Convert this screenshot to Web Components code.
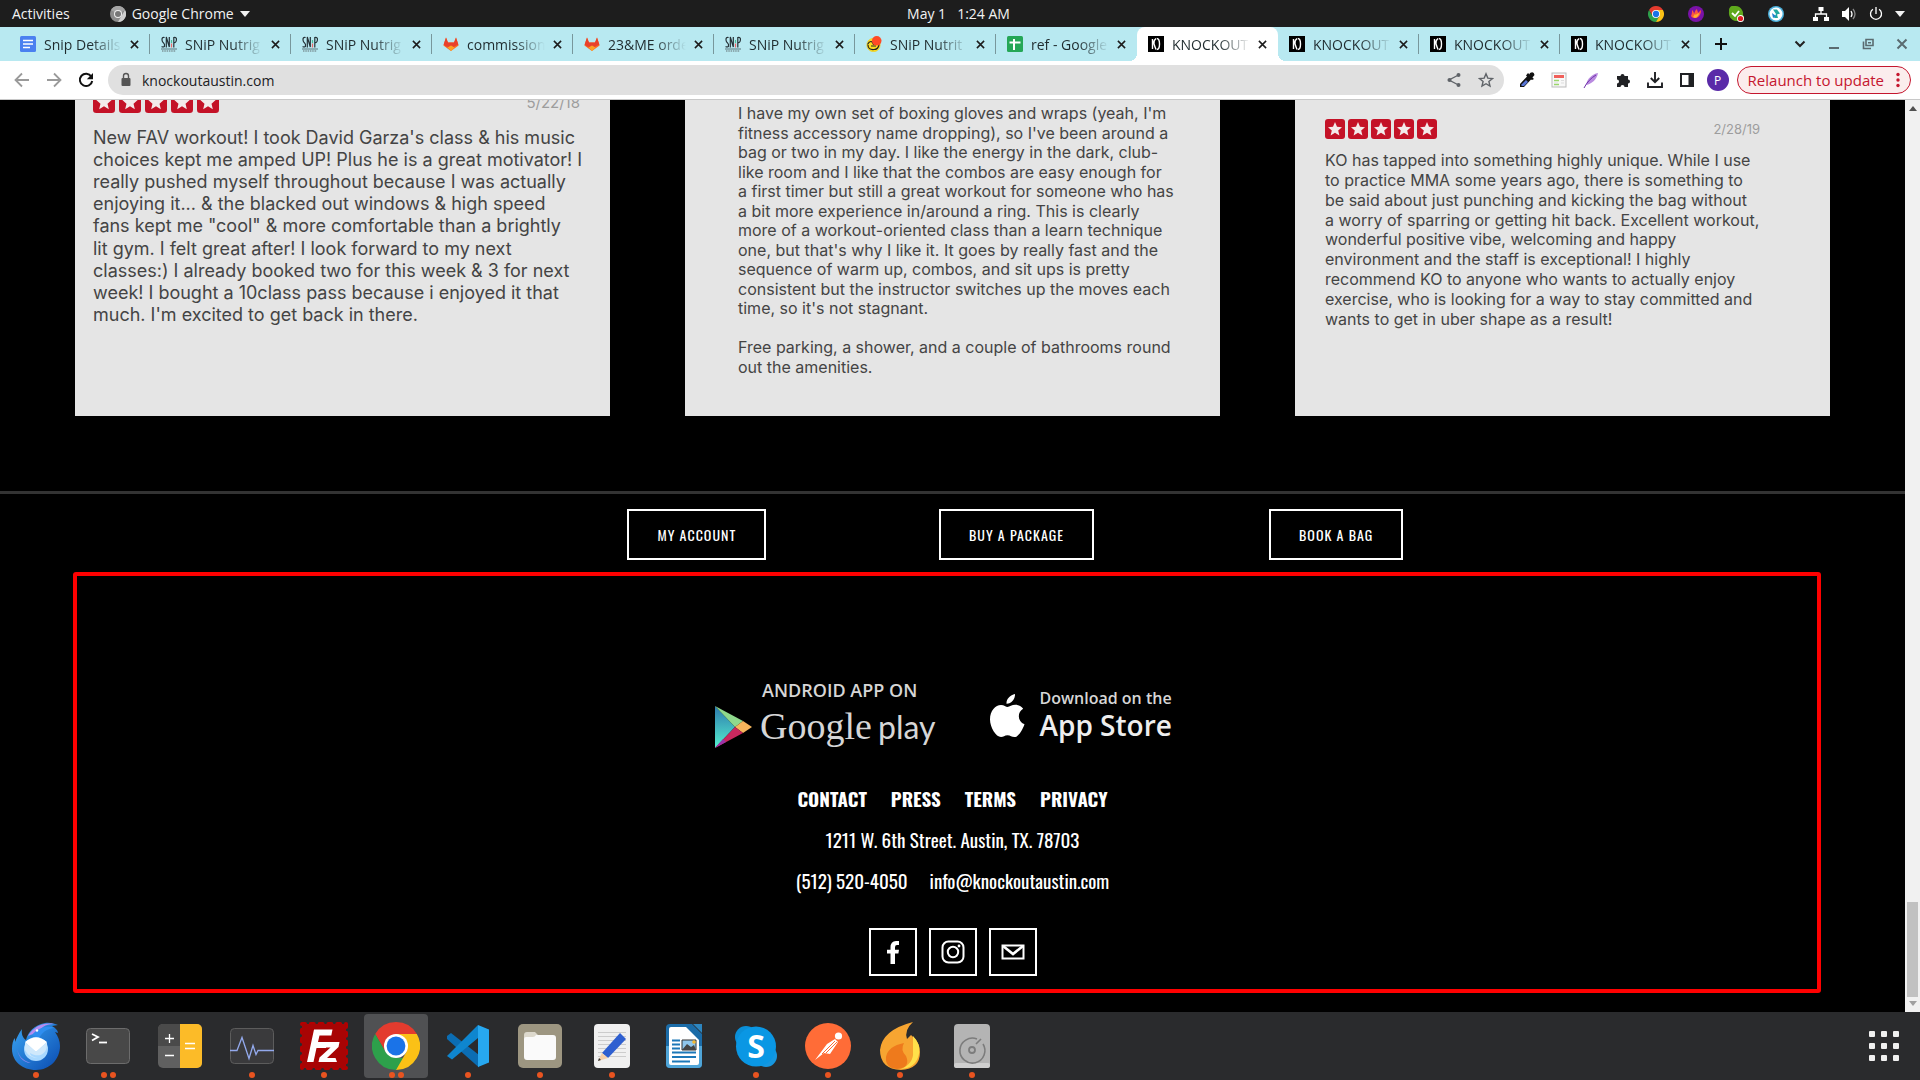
<!DOCTYPE html>
<html lang="en">
<head>
<meta charset="utf-8">
<title>knockoutaustin.com</title>
<style>
  html, body { height: 100%; }
  body { margin: 0; background: #000; font-family: "Open Sans", "Noto Sans", sans-serif; overflow: hidden; }
</style>
</head>
<body>
<desktop-screen>
  <top-bar></top-bar>
  <tab-strip>
    <browser-tab icon="docs">Snip Details</browser-tab>
    <browser-tab icon="snip">SNiP Nutrig</browser-tab>
    <browser-tab icon="snip">SNiP Nutrig</browser-tab>
    <browser-tab icon="gitlab">commission</browser-tab>
    <browser-tab icon="gitlab">23&amp;ME orde</browser-tab>
    <browser-tab icon="snip">SNiP Nutrig</browser-tab>
    <browser-tab icon="face">SNiP Nutrit</browser-tab>
    <browser-tab icon="sheets" last>ref - Google</browser-tab>
    <browser-tab icon="ko" active>KNOCKOUT</browser-tab>
    <browser-tab icon="ko">KNOCKOUT</browser-tab>
    <browser-tab icon="ko">KNOCKOUT</browser-tab>
    <browser-tab icon="ko">KNOCKOUT</browser-tab>
  </tab-strip>
  <tool-bar></tool-bar>
  <page-view>
    <review-row>
      <review-card variant="large" date="5/22/18">
        <span>New FAV workout! I took David Garza's class &amp; his music</span>
        <span>choices kept me amped UP! Plus he is a great motivator! I</span>
        <span>really pushed myself throughout because I was actually</span>
        <span>enjoying it... &amp; the blacked out windows &amp; high speed</span>
        <span>fans kept me "cool" &amp; more comfortable than a brightly</span>
        <span>lit gym. I felt great after! I look forward to my next</span>
        <span>classes:) I already booked two for this week &amp; 3 for next</span>
        <span>week! I bought a 10class pass because i enjoyed it that</span>
        <span>much. I'm excited to get back in there.</span>
      </review-card>
      <review-card variant="plain">
        <span>I have my own set of boxing gloves and wraps (yeah, I'm</span>
        <span>fitness accessory name dropping), so I've been around a</span>
        <span>bag or two in my day. I like the energy in the dark, club-</span>
        <span>like room and I like that the combos are easy enough for</span>
        <span>a first timer but still a great workout for someone who has</span>
        <span>a bit more experience in/around a ring. This is clearly</span>
        <span>more of a workout-oriented class than a learn technique</span>
        <span>one, but that's why I like it. It goes by really fast and the</span>
        <span>sequence of warm up, combos, and sit ups is pretty</span>
        <span>consistent but the instructor switches up the moves each</span>
        <span>time, so it's not stagnant.</span>
        <span></span>
        <span>Free parking, a shower, and a couple of bathrooms round</span>
        <span>out the amenities.</span>
      </review-card>
      <review-card variant="small" date="2/28/19">
        <span>KO has tapped into something highly unique. While I use</span>
        <span>to practice MMA some years ago, there is something to</span>
        <span>be said about just punching and kicking the bag without</span>
        <span>a worry of sparring or getting hit back. Excellent workout,</span>
        <span>wonderful positive vibe, welcoming and happy</span>
        <span>environment and the staff is exceptional! I highly</span>
        <span>recommend KO to anyone who wants to actually enjoy</span>
        <span>exercise, who is looking for a way to stay committed and</span>
        <span>wants to get in uber shape as a result!</span>
      </review-card>
    </review-row>
    <action-row></action-row>
    <site-footer></site-footer>
  </page-view>
  <app-dock></app-dock>
</desktop-screen>

<script>
const svg = (box, body) => `<svg viewBox="${box}" aria-hidden="true">${body}</svg>`;
const chromeLogo = svg("0 0 48 48", `<path d="M24 0A24 24 0 0 1 44.8 12H24L13.6 30 3.2 12A24 24 0 0 1 24 0z" fill="#e33b2e"/><path d="M3.2 12 13.6 30 24 36h10.4L24 48A24 24 0 0 1 3.2 12z" fill="#2da04b"/><path d="M44.8 12A24 24 0 0 1 24 48L34.4 30 24 12z" fill="#fbc116"/><circle cx="24" cy="24" r="12" fill="#fff"/><circle cx="24" cy="24" r="9.4" fill="#1a73e8"/>`);

const ICONS = {
  chrome: chromeLogo,
  chromeGray: svg("0 0 16 16", `<circle cx="8" cy="8" r="8" fill="#8b8b8b"/><path d="M8 8 1 4a8 8 0 0 1 14 0z" fill="#a5a5a5"/><path d="M15 4a8 8 0 0 1-7 12l3.500-6z" fill="#d0d0d0"/><circle cx="8" cy="8" r="4" fill="#eee"/><circle cx="8" cy="8" r="3" fill="#777"/>`),
  flame: svg("0 0 16 16", `<circle cx="8" cy="8" r="8" fill="#7a12a8"/><path d="M3 10c1-2 1-4 1-6 1 1 2 2 2 4 1-2 1-4 3-5 0 2 1 2 1 4l3-3c0 3-1 7-5 8-2 0-4 0-5-2z" fill="#ff5a3c"/><path d="M5 11c1-1 1-2 2-3 0 1 1 1 2 0l2-1c0 2-2 5-4 5z" fill="#ffb52e"/>`),
  greenCheck: svg("0 0 16 16", `<path d="M1 4a4 4 0 0 1 5-4 8 8 0 0 1 9 9 4 4 0 0 1-5 6A8 8 0 0 1 1 6z" fill="#5fa91c"/><path d="m4 7 3 3 4-5" fill="none" stroke="#fff" stroke-width="1.800"/><circle cx="12.500" cy="12.500" r="3.500" fill="#fff"/><circle cx="12.500" cy="12.500" r="2.600" fill="#e01b24"/>`),
  teal: svg("0 0 16 16", `<circle cx="8" cy="8" r="8" fill="#4ab0dc"/><circle cx="8" cy="8" r="6.500" fill="#fff"/><path d="M5 3.500h4l3 4-3 1 1 3.500H6l2-4z" fill="#20a8a0"/><path d="M4 7l4 3-3 2z" fill="#1e7fd0"/>`),
  network: svg("0 0 16 16", `<path d="M5.500 1h5v4h-5zM0 11h5v4H0zM11 11h5v4h-5z" fill="#fff"/><path d="M8 5v3M2.500 11V8h11v3" fill="none" stroke="#fff" stroke-width="1.300"/>`),
  volume: svg("0 0 16 16", `<path d="M1 5h3l4-4v14l-4-4H1z" fill="#fff"/><path d="M10 5q2 3 0 6" stroke="#fff" fill="none" stroke-width="1.300"/><path d="M12 3q4 5 0 10" stroke="#888" fill="none" stroke-width="1.300"/>`),
  power: svg("0 0 16 16", `<path d="M8 0v8M4.500 2.500a6.300 6.300 0 1 0 7 0" stroke="#fff" fill="none" stroke-width="1.500"/>`),
  caret: svg("0 0 10 6", `<path d="M0 0h10L5 6z" fill="#f2f2f2"/>`),
  docs: svg("0 0 16 16", `<rect width="16" height="16" rx="1.500" fill="#4a80f0"/><path d="M3 4.500h10M3 8h10M3 11.500h7" stroke="#fff" stroke-width="1.700"/>`),
  sheets: svg("0 0 16 16", `<rect width="16" height="16" rx="1.500" fill="#25a756"/><path d="M2.500 6.500h11M7 3v11" stroke="#fff" stroke-width="2"/>`),
  snip: svg("0 0 16 16", `<g fill="none" stroke="#253238" stroke-width="1.200"><path d="M3.600 1.500Q.8.800 1 4q.2 2 1.600 3T3.400 10.500Q2 11.500.6 10.500"/><path d="M5.300 11.500V1l3 10V1"/><path d="M12.800 11.500V1.500q3-.6 2.600 2.500T12.800 6.500"/></g><path d="M10.500 4v3" stroke="#4bbf9a" stroke-width="1.200"/><path d="M10.500 7.500v4" stroke="#e66" stroke-width="1.200"/><path d="M0 13h16" stroke="#5d777c" stroke-width="1"/><path d="M1 15h14" stroke="#7d979c" stroke-width="1.500" stroke-dasharray="1.500 .8"/>`),
  gitlab: svg("0 0 16 16", `<path d="m8 15 7.600-5.600-2.600-8-2 5H5L3 1.400.4 9.400z" fill="#fc6d26"/><path d="M8 15 .6 8.500 3 1.400 5 6.400h6l2-5 2.400 7-2.900 1.500L8 12.500 3 10z" fill="#e8412c"/><path d="m4.500 11.500 3.500-2 3.500 2L8 15z" fill="#fca326"/>`),
  face: svg("0 0 16 16", `<circle cx="7.500" cy="9" r="6.700" fill="#fbdc20" stroke="#eccb1c" stroke-width=".6"/><path d="M1.500 8.500c2-4 5-4 6 0h6M2 9q0 5 6 4.500 4 0 5-4.500M5 10h5" stroke="#222" fill="none" stroke-width="1.200"/><circle cx="10.700" cy="4.800" r="4.800" fill="#ff4a26"/>`),
  ko: svg("0 0 16 16", `<rect width="16" height="16" fill="#000"/><g fill="none" stroke="#fff" stroke-width="1.400"><path d="M4.500 3v10M8 2.500Q5 5 6 8t2 5.500"/><path d="M8.800 2.500Q11.500 2.500 11.500 8t-2.700 5.500"/></g>`),
  close: svg("0 0 10 10", `<path d="m1 1 8 8M9 1 1 9" stroke="currentColor" stroke-width="1.700"/>`),
  plus: svg("0 0 12 12", `<path d="M6 0v12M0 6h12" stroke="#111" stroke-width="2"/>`),
  chevron: svg("0 0 12 12", `<path d="m1.500 3.500 4.500 4.500 4.500-4.500" fill="none" stroke="#222" stroke-width="2"/>`),
  minimize: svg("0 0 12 12", `<path d="M1 10h10" stroke="#5a6b70" stroke-width="2"/>`),
  restore: svg("0 0 12 12", `<path d="M4 1.500h7v6H4zM1.500 3.500V10.500H9" fill="none" stroke="#5a6b70" stroke-width="1.600"/><path d="M6 4h3v1.500H6z" fill="#5a6b70"/>`),
  closeGray: svg("0 0 12 12", `<path d="m1.500 1.500 9 9M10.500 1.500l-9 9" stroke="#5a6b70" stroke-width="2"/>`),
  back: svg("0 0 16 16", `<path d="M15 8H2M8 1.500 1.500 8 8 14.500" fill="none" stroke="#9a9a9a" stroke-width="1.800"/>`),
  forward: svg("0 0 16 16", `<path d="M1 8h13M8 1.500 14.500 8 8 14.500" fill="none" stroke="#9a9a9a" stroke-width="1.800"/>`),
  reload: svg("0 0 16 16", `<path d="M13.300 4.500A6.200 6.200 0 1 0 14.200 9" fill="none" stroke="#111" stroke-width="2"/><path d="M15 1v6.200H8.800z" fill="#111"/>`),
  lock: svg("0 0 12 16", `<rect x="1.500" y="6" width="9" height="8" rx="1" fill="#555"/><path d="M3.500 6V4a2.500 2.500 0 0 1 5 0v2" fill="none" stroke="#555" stroke-width="1.400"/>`),
  share: svg("0 0 16 16", `<path d="M12.500 3 3 8l9.500 5" fill="none" stroke="#5f6368" stroke-width="1.400"/><circle cx="12.500" cy="3" r="2" fill="#5f6368"/><circle cx="3.500" cy="8" r="2" fill="#5f6368"/><circle cx="12.500" cy="13" r="2" fill="#5f6368"/>`),
  star: svg("0 0 16 16", `<path d="m8 1.800 1.800 4.300 4.700.4-3.600 3 1.100 4.600L8 11.700l-4 2.400 1.100-4.600-3.600-3 4.700-.4z" fill="none" stroke="#5f6368" stroke-width="1.400"/>`),
  dropper: svg("0 0 16 16", `<path d="m9 1 6 6-2 1-1-.5L5 15H1v-3l7-7.500L7 3.500z" fill="#111"/><path d="m7 8 2 2-4 4H2.500v-1.500z" fill="#5976d8"/><path d="M11 1q4-2 4.500 2L13 6l-3-3z" fill="#111"/>`),
  page: svg("0 0 16 16", `<rect x="1" y="1" width="14" height="14" fill="#f8f8f8" stroke="#bbb"/><path d="M3 3h10v3H3z" fill="#f0605a"/><path d="M3 8.500h5M3 12.500h5" stroke="#9bd66b" stroke-width="1.500"/><path d="M10 8.500h3M10 11h3M3 11h4" stroke="#ddd"/>`),
  feather: svg("0 0 16 16", `<path d="M3 13C4 7 9 2 15 1c-1 6-6 11-12 12z" fill="#b98ae0"/><path d="M1 16C4 10 8 6 13 3" stroke="#6f33a8" fill="none"/>`),
  puzzle: svg("0 0 16 16", `<path d="M2 4h3.500a2 2 0 1 1 4 0H13v3.500a2 2 0 1 1 0 4V15H9.500a2 2 0 0 0-4 0H2v-3.500a2 2 0 0 0 0-4z" fill="#202124"/>`),
  download: svg("0 0 16 16", `<path d="M8 0v10M3.800 6 8 10.200 12.200 6M1 10.500V15h14v-4.500" fill="none" stroke="#202124" stroke-width="1.900"/>`),
  panel: svg("0 0 16 16", `<path d="M2 2h12v12H2z" fill="none" stroke="#202124" stroke-width="2"/><path d="M9.500 2H14v12H9.500z" fill="#202124"/>`),
  dots: svg("0 0 4 16", `<g fill="#c5162e"><circle cx="2" cy="2.500" r="1.700"/><circle cx="2" cy="8" r="1.700"/><circle cx="2" cy="13.500" r="1.700"/></g>`),
  rating: svg("0 0 20 20", `<rect width="20" height="20" rx="3" fill="#c41227"/><path d="m10 3 2 4.800 5 .4-3.800 3.300 1.200 5L10 13.800l-4.400 2.700 1.200-5L3 8.200l5-.4z" fill="#f3eaea"/>`),
  play: svg("0 0 37 42", `<defs><linearGradient id="g" x1="0" y1="0" x2="0" y2="1"><stop offset="0" stop-color="#2d79ad"/><stop offset="1" stop-color="#55f0cf"/></linearGradient></defs><path d="M0 0v42l20-21z" fill="url(#g)"/><path d="M0 0 28 15l-8 6z" fill="#8fd98c"/><path d="m20 21 8-6 9 6-9 6z" fill="#f6b65c"/><path d="m0 42 20-21 8 6z" fill="#c8285e"/><path d="m0 42 8-9 3 3z" fill="#9b33a8"/>`),
  apple: svg("0 0 35 43", `<path d="M25 0c.5 5-4 10-8.500 9.800C16 5 20.500.8 25 0z" fill="#fff"/><path d="M17.500 13c2 0 4.500-2.300 8-2.200 3.300.1 6 1.500 7.700 4-6.500 4-5.500 12.700 1.300 15.500C32.500 36 28.500 43 24.500 43c-3 0-4-1.800-7-1.800S13.500 43 11 43C6 43 0 33.500 0 25.500 0 16.500 5.500 11 11 11c3 0 5 2 6.500 2z" fill="#fff"/>`),
  facebook: svg("0 0 24 24", `<path d="M9.500 24V13.500H6V9.700h3.500V7.500Q9.500 1 15 1h3v4h-2Q14 5 14 7.200v2.500h4l-.6 3.800H14V24z" fill="#fff"/>`),
  instagram: svg("0 0 24 24", `<rect x="1.500" y="1.500" width="21" height="21" rx="6" fill="none" stroke="#fff" stroke-width="2"/><circle cx="12" cy="12" r="5.200" fill="none" stroke="#fff" stroke-width="2"/><circle cx="18" cy="6" r="1.400" fill="#fff"/>`),
  mail: svg("0 0 24 24", `<path d="M1.500 5.500h21v13h-21z" fill="none" stroke="#fff" stroke-width="2"/><path d="M2 6 12 14 22 6" fill="none" stroke="#fff" stroke-width="2.600"/>`),
  thunderbird: svg("0 0 48 48", `<defs><linearGradient id="a" x1="0" y1="0" x2="1" y2="1"><stop offset="0" stop-color="#3ba7f5"/><stop offset="1" stop-color="#0a4bb0"/></linearGradient></defs><path d="M10 7c-1 5 1 9 4 11 2-8 8-15 19-17 5-1 10 1 13 2l-6 1c3 2 6 4 6 7l-3-1c3 4 5 9 5 14 0 13-10 24-24 24S0 39 0 27c0-5 1-9 3-11v4c2-5 4-9 7-13z" fill="url(#a)"/><path d="M16 14C22 4 32 0 42 2c-9 0-14 4-16 10-3 0-6 0-10 2z" fill="#b58cf0"/><path d="M20 13C26 6 34 3 43 6c-8 0-14 5-16 11z" fill="#2f8ef0"/><circle cx="24" cy="27" r="12" fill="#a8d8ff"/><path d="M13 20q11-9 22 0L25 29q-1 1-2 0z" fill="#fff"/><path d="M13 20v8q4 8 13 8c-6-1-8-3-8-5 8 5 17 2 17-9v-2L25 29q-1 1-2 0z" fill="#cfe8fb"/><path d="M5 24c0 9 6 15 14 17-9 0-14-8-14-17z" fill="#7e86ec"/><circle cx="25" cy="8.500" r="1.200" fill="#fff"/>`),
  terminal: svg("0 0 48 48", `<rect x="2.500" y="6.500" width="43" height="35" rx="4" fill="#484848" stroke="#6c6c6c"/><path d="m8 12 6 3-6 3.500" fill="none" stroke="#fff" stroke-width="1.800"/><path d="M15 20.500h8" stroke="#fff" stroke-width="1.800"/>`),
  calc: svg("0 0 48 48", `<rect x="2" y="2" width="44" height="44" rx="5" fill="#606060"/><path d="M24 2H7a5 5 0 0 0-5 5v17h22z" fill="#4a4a4a"/><path d="M24 2h17a5 5 0 0 1 5 5v34a5 5 0 0 1-5 5H24z" fill="#fcbb28"/><path d="M9 16.500h9M13.500 12v9M9 33.500h9M29 21.500h10M29 26.500h10" stroke="#fff" stroke-width="1.300"/>`),
  monitor: svg("0 0 48 48", `<rect x="2.500" y="6.500" width="43" height="35" rx="4" fill="#3a3a3c" stroke="#5c5c5c"/><path d="M2 28.500h7l5-13 7 21 4-13 3 9 2-4h16" fill="none" stroke="#93a9ec" stroke-width="1.300"/>`),
  filezilla: svg("0 0 48 48", `<rect x="2" y="2" width="44" height="44" fill="#a60000" stroke="#b40000" stroke-width="4" stroke-linecap="round" stroke-dasharray="3 5.800"/><rect x="2" y="2" width="44" height="44" fill="#a80404"/><path d="M7 40 14 7.500H32.500L31.300 13.500H19.500L18 20h9.500L26 26H16.500L13.500 40zM23 20H39.500L38.500 25 27 36h8.500L37 40H18.500L19.500 35.500 30.500 25.500H22z" fill="#fff"/>`),
  vscode: svg("0 0 48 48", `<path d="m3 14 4-3L35 33v12.500L3 17z" fill="#0b6db3"/><path d="M3 34 34 3v13L8 37.500 3 34z" fill="#0e86cf"/><path d="M34 3 45 7.500v33L34 45z" fill="#27a8f0"/>`),
  files: svg("0 0 48 48", `<rect x="2" y="2" width="44" height="44" rx="5" fill="#9d9681"/><path d="M8 13q0-3 3-3h8l3 3h15v10H8z" fill="#ddd9cd"/><path d="M8 17q0-2 2-2h7q2 0 3-2h17q3 0 3 3v19q0 3-3 3H11q-3 0-3-3z" fill="#fafafa"/>`),
  editor: svg("0 0 48 48", `<rect x="6" y="2" width="36" height="44" rx="4" fill="#f0f0f0"/><path d="M10 10.500h28M10 14.500h28M10 18.500h28M10 22.500h28M10 26.500h28M10 30.500h28M10 34.500h28" stroke="#ccc"/><path d="M32 11 38 17 20 36l-6-5z" fill="#2e5fd0"/><path d="m14 31 6 5-10 3z" fill="#f6cfa8"/><path d="m11 36 2 2-3 1z" fill="#333"/>`),
  writer: svg("0 0 48 48", `<path d="M10 2h22l10 10v30q0 4-4 4H10q-4 0-4-4V6q0-4 4-4z" fill="#1b6ca8"/><path d="M6 24h36v18q0 4-4 4H10q-4 0-4-4z" fill="#4fa5d8"/><path d="M11 5h15l13 13v23q0 2-2 2H11q-2 0-2-2V7q0-2 2-2z" fill="#fff"/><path d="M33 2h9v9z" fill="#2d86c0"/><path d="M12 18.500h8M12 22.500h8M12 26.500h8M12 30.500h24M12 35h24M12 39.500h18" stroke="#1d78b8" stroke-width="2"/><path d="M22 18h14v10H22z" fill="#8fc6ec" stroke="#333"/><path d="m22 28 5-6 4 3 3-2 2 5z" fill="#444"/><circle cx="34" cy="20" r="1.800" fill="#f5b82e"/>`),
  skype: svg("0 0 48 48", `<circle cx="14" cy="15" r="11" fill="#0a8fd8"/><circle cx="34" cy="34" r="11" fill="#1697e0"/><circle cx="24" cy="24.500" r="20" fill="#0a97e4"/><text x="24" y="36" text-anchor="middle" font-family="Open Sans" font-weight="700" font-size="32" fill="#fff">S</text>`),
  postman: svg("0 0 48 48", `<circle cx="24" cy="24" r="23" fill="#ff6c37"/><circle cx="34.500" cy="14" r="3.600" fill="#fff"/><path d="m31 17 3 3-8 12-6-1-9 7 9-12 3-4z" fill="#fff"/><path d="M31 19 18 32M33 20 22 31" stroke="#ff6c37"/>`),
  burn: svg("0 0 48 48", `<path d="M37 0q-9 8-6 17l4-4q9 7 9 17 0 17-19 18Q4 47 4 28 6 8 37 0z" fill="#f7a531"/><path d="M37 14q8 8 6 18-3 14-18 15 13-6 12-17z" fill="#ffe04a"/><path d="M28 21q-4 7 2 13 5 12-9 13-12-1-11-12Q12 24 28 21z" fill="#ee7a1c"/>`),
  disk: svg("0 0 48 48", `<rect x="6" y="2" width="36" height="44" rx="4" fill="#b4b4b4"/><rect x="6" y="41" width="36" height="5" rx="2" fill="#cfcfcf"/><path d="M35 22a12.500 12.500 0 1 1-6-5" fill="none" stroke="#7c7c7c" stroke-width="1.600"/><circle cx="24" cy="28" r="3" fill="none" stroke="#7c7c7c" stroke-width="1.800"/><path d="m28 22 5-5" stroke="#7c7c7c" stroke-width="1.600"/>`),
  grid: svg("0 0 30 30", [0, 12, 24].map(y => [0, 12, 24].map(x => `<rect x="${x}" y="${y}" width="6" height="6" rx="1" fill="#f0f0f0"/>`).join("")).join("")),
  up: svg("0 0 8 5", `<path d="M4 0l4 5H0z" fill="#505050"/>`),
  down: svg("0 0 8 5", `<path d="M0 0h8L4 5z" fill="#a0a0a0"/>`)
};

const define = (name, css, html) => customElements.define(name, class extends HTMLElement {
  constructor() { super(); this.attachShadow({ mode: "open" }); }
  connectedCallback() {
    const body = typeof html === "function" ? html(this) : html;
    this.shadowRoot.innerHTML = `<style>:host,*,::before,::after{box-sizing:border-box}${css}</style>${body}`;
  }
});
const buttonReset = "button{border:0;background:none;padding:0;margin:0;font:inherit;color:inherit;display:flex;align-items:center;justify-content:center}";

define("ui-icon",
  ":host{display:block;flex:none;width:var(--w,16px);height:var(--h,var(--w,16px))}svg{display:block;width:100%;height:100%}",
  el => ICONS[el.getAttribute("name")]);

define("desktop-screen",
  `:host{display:flex;flex-direction:column;height:100vh}
   ::slotted(*){flex:none}
   ::slotted(page-view){flex:1;min-height:0}`,
  "<slot></slot>");

define("top-bar",
  `:host{display:grid;grid-template-columns:1fr auto 1fr;align-items:center;height:27px;background:#1d1d1d;color:#f2f2f2;font-size:14px;line-height:26px;padding:0 15px 0 12px}
   ${buttonReset}
   .left,.right{display:flex;align-items:center}
   .left{gap:40px}.menu{gap:6px}
   .clock{gap:11px}
   .right{justify-content:flex-end}.tray{display:flex;gap:24px;margin-right:29px}
   .sys{gap:12px}`,
  `<div class="left"><button>Activities</button>
     <button class="menu"><ui-icon name="chromeGray"></ui-icon><span>Google Chrome</span><ui-icon name="caret" style="--w:10px;--h:6px"></ui-icon></button></div>
   <button class="clock"><span>May 1</span><span>1:24 AM</span></button>
   <div class="right"><div class="tray"><ui-icon name="chrome"></ui-icon><ui-icon name="flame"></ui-icon><ui-icon name="greenCheck"></ui-icon><ui-icon name="teal"></ui-icon></div>
     <button class="sys" aria-label="System menu"><ui-icon name="network"></ui-icon><ui-icon name="volume"></ui-icon><ui-icon name="power" style="--w:14px"></ui-icon><ui-icon name="caret" style="--w:10px;--h:6px"></ui-icon></button></div>`);

define("tab-strip",
  `:host{display:flex;align-items:stretch;height:34px;background:#b8e9f1;padding:0 12px 0 9px}
   ${buttonReset}
   .tabs{display:flex;flex:0 1 1692px;min-width:0}
   .new{width:40px}
   .controls{display:flex;align-items:center;gap:22px;margin-left:auto}`,
  `<div class="tabs"><slot></slot></div>
   <button class="new" aria-label="New tab"><ui-icon name="plus" style="--w:12px"></ui-icon></button>
   <div class="controls">${["chevron", "minimize", "restore", "closeGray"].map(n => `<button aria-label="${n}"><ui-icon name="${n}" style="--w:12px"></ui-icon></button>`).join("")}</div>`);

define("browser-tab",
  `:host{display:flex;align-items:center;flex:1 1 0;min-width:0;padding:0 8px 0 11px;position:relative;color:#1f2b2e;font-size:14px;border-radius:8px 8px 0 0}
   ${buttonReset}
   :host::after{content:"";position:absolute;right:0;top:7px;bottom:7px;width:1px;background:#78979c}
   :host([last])::after,:host([active])::after{display:none}
   :host([active]){background:#fff}
   :host([active])::before{content:"";position:absolute;left:-8px;right:-8px;bottom:0;height:8px;
     background:radial-gradient(circle at 0 0,transparent 8px,#fff 8px) left/8px 8px no-repeat,radial-gradient(circle at 100% 0,transparent 8px,#fff 8px) right/8px 8px no-repeat}
   .title{flex:1;min-width:0;gap:8px;justify-content:flex-start;overflow:hidden}
   .title span{flex:1;text-align:left;white-space:nowrap;overflow:hidden;-webkit-mask-image:linear-gradient(90deg,#000 60%,transparent);mask-image:linear-gradient(90deg,#000 60%,transparent)}
   .close{width:16px;height:16px;margin-left:4px;color:#1c1c1c}`,
  el => `<button class="title"><ui-icon name="${el.getAttribute("icon")}"></ui-icon><span><slot></slot></span></button>
   <button class="close" aria-label="Close tab"><ui-icon name="close" style="--w:9px"></ui-icon></button>`);

define("tool-bar",
  `:host{display:flex;align-items:center;height:39px;background:#fff;border-bottom:1px solid #c8c8c8;padding:0 9px 0 14px;font-size:14px}
   ${buttonReset}
   .nav{display:flex;gap:16px;margin-right:14px}
   .omni{flex:1;display:flex;align-items:center;height:30px;border-radius:15px;background:#e0e0e0;padding:0 10px 0 12px}
   input{flex:1;min-width:0;border:0;background:none;outline:0;font:inherit;color:#202124;padding:0 0 0 10px}
   .omni .tools{display:flex;gap:16px}
   .ext{display:flex;gap:16px;margin:0 12px 0 15px}
   .avatar{width:22px;height:22px;border-radius:50%;background:#5a2aa8;color:#fff;font-size:12px}
   .update{height:28px;margin-left:8px;border:1px solid #c5162e;border-radius:14px;background:#fbeded;color:#c5162e;padding:0 10px;gap:12px;font-size:15px}`,
  `<div class="nav">${["back", "forward", "reload"].map(n => `<button aria-label="${n}"><ui-icon name="${n}"></ui-icon></button>`).join("")}</div>
   <div class="omni"><ui-icon name="lock" style="--w:12px;--h:16px"></ui-icon><input aria-label="Address" value="knockoutaustin.com">
     <div class="tools"><button aria-label="Share"><ui-icon name="share"></ui-icon></button><button aria-label="Bookmark"><ui-icon name="star"></ui-icon></button></div></div>
   <div class="ext">${["dropper", "page", "feather", "puzzle", "download", "panel"].map(n => `<button aria-label="${n}"><ui-icon name="${n}"></ui-icon></button>`).join("")}</div>
   <button class="avatar">P</button>
   <button class="update"><span>Relaunch to update</span><ui-icon name="dots" style="--w:4px;--h:16px"></ui-icon></button>`);

define("page-view",
  `:host{display:flex;background:#000;overflow:hidden}
   main{flex:1;min-width:0;display:flex;flex-direction:column}
   ::slotted(*){flex:none}`,
  `<main><slot></slot></main><scroll-track></scroll-track>`);

define("scroll-track",
  `:host{display:flex;flex-direction:column;align-items:center;justify-content:space-between;width:15px;background:#f1f1f1;padding:6px 2px}
   .thumb{width:11px;height:95px;background:#c1c1c1;margin-bottom:4px}
   .end{display:flex;flex-direction:column;align-items:center}`,
  `<ui-icon name="up" style="--w:8px;--h:5px"></ui-icon><div class="end"><div class="thumb"></div><ui-icon name="down" style="--w:8px;--h:5px"></ui-icon></div>`);

define("review-row",
  `:host{display:grid;grid-template-columns:repeat(3,1fr);gap:75px;height:316px;padding:0 75px}`,
  "<slot></slot>");

define("star-rating",
  `:host{display:flex;gap:var(--star-gap)}ui-icon{--w:var(--star)}`,
  "<ui-icon name='rating'></ui-icon>".repeat(5));

define("review-card",
  `:host{display:block;overflow:hidden;background:#e5e5e5;color:#444;font-family:Inter,sans-serif;padding:4px 30px 0 53px;--rows-height:273px;font-size:16px}
   :host([variant=large]){padding:0 30px 0 18px;--rows-height:200px;--star:22px;--star-gap:4px;font-size:18px}
   :host([variant=small]){padding:19px 70px 0 30px;--rows-height:178px;--star:20px;--star-gap:3px;font-size:16px}
   header{display:flex;justify-content:space-between;align-items:center;margin-bottom:12px;height:var(--star)}
   :host([variant=large]) header{margin:-9px 0 13px}
   time{color:#9d9d9d;font-size:13px}
   :host([variant=large]) time{font-size:15px}
   .rows{display:grid;grid-auto-rows:1fr;height:var(--rows-height)}
   ::slotted(span){display:block;white-space:nowrap;line-height:19px;align-self:center}`,
  el => `${el.hasAttribute("date") ? `<header><star-rating></star-rating><time>${el.getAttribute("date")}</time></header>` : ""}<div class="rows"><slot></slot></div>`);

const narrow = `Oswald,"Roboto Condensed","Liberation Sans Narrow","Liberation Sans",sans-serif`;
define("action-row",
  `:host{display:grid;grid-template-columns:repeat(3,1fr);justify-items:center;margin-top:75px;border-top:3px solid #333;padding:15px 409px 12px 537px;font-family:${narrow}}
   a{display:flex;align-items:center;height:51px;border:2px solid #fff;padding:0 28px;color:#fff;text-decoration:none;font-size:14px;letter-spacing:1px;white-space:nowrap}`,
  `<a href="#account">MY ACCOUNT</a><a href="#package">BUY A PACKAGE</a><a href="#book">BOOK A BAG</a>`);

define("store-badge",
  `:host{display:block}
   a{display:flex;align-items:flex-end;color:#d6d6d6;text-decoration:none;white-space:nowrap}
   .google{gap:8px;padding-bottom:5px}.google .top{font-size:18px;line-height:24px;font-weight:600;padding:0 0 3px 2px}
   .google .name{display:flex;gap:6px;align-items:baseline;line-height:42px;font-family:"Liberation Serif",serif;font-size:38px}
   .google .play{font-family:Lato,sans-serif;font-size:32px}
   .apple{gap:14px;align-items:center}.apple .top{font-size:16px;line-height:20px;font-weight:600}
   .apple .name{font-size:28px;line-height:34px;font-weight:600;color:#eee}
   div{display:flex;flex-direction:column}div.name{flex-direction:row}`,
  el => el.getAttribute("store") === "google"
    ? `<a class="google" href="#google"><ui-icon name="play" style="--w:37px;--h:42px"></ui-icon><div><span class="top">ANDROID APP ON</span><div class="name"><span>Google</span><span class="play">play</span></div></div></a>`
    : `<a class="apple" href="#apple"><ui-icon name="apple" style="--w:35px;--h:43px"></ui-icon><div><span class="top">Download on the</span><span class="name">App Store</span></div></a>`);

define("social-link",
  `:host{display:block}a{display:flex;align-items:center;justify-content:center;width:48px;height:48px;border:2px solid #fff}`,
  el => `<a href="#${el.getAttribute("icon")}" aria-label="${el.getAttribute("icon")}"><ui-icon name="${el.getAttribute("icon")}" style="--w:24px"></ui-icon></a>`);

define("site-footer",
  `:host{display:flex;flex-direction:column;align-items:center;margin:0 84px 0 73px;height:421px;border:4px solid #f00;border-radius:3px;padding:105px 0 0 11px;color:#fff;font-family:${narrow};font-size:19px}
   a{color:inherit;text-decoration:none}
   .stores{display:flex;gap:55px;align-items:center;height:68px;margin:0 18px 0 0;font-family:"Open Sans",sans-serif}
   .links,.contact{display:flex;line-height:41px}
   .links{gap:24px;font-weight:700;margin-top:29px}
   .contact{gap:22px}
   p{margin:0;line-height:41px}
   .social{display:flex;gap:12px;margin-top:27px}`,
  `<div class="stores"><store-badge store="google"></store-badge><store-badge store="apple"></store-badge></div>
   <nav class="links"><a href="#contact">CONTACT</a><a href="#press">PRESS</a><a href="#terms">TERMS</a><a href="#privacy">PRIVACY</a></nav>
   <p>1211 W. 6th Street. Austin, TX. 78703</p>
   <div class="contact"><a href="tel:5125204050">(512) 520-4050</a><a href="mailto:info@knockoutaustin.com">info@knockoutaustin.com</a></div>
   <div class="social"><social-link icon="facebook"></social-link><social-link icon="instagram"></social-link><social-link icon="mail"></social-link></div>`);

define("dock-item",
  `:host{display:block;width:64px;height:64px}
   button{display:flex;flex-direction:column;align-items:center;width:100%;height:100%;border:0;border-radius:4px;background:none;padding:8px 0 0;gap:2px}
   :host([active]) button{background:#505153}
   .dots{display:flex;gap:3px}.dots i{width:6px;height:6px;border-radius:50%;background:#e95420}`,
  el => `<button aria-label="${el.getAttribute("icon")}"><ui-icon name="${el.getAttribute("icon")}" style="--w:48px"></ui-icon><span class="dots">${"<i></i>".repeat(+el.getAttribute("windows"))}</span></button>`);

define("app-dock",
  `:host{display:flex;align-items:center;height:68px;background:#2a2b2d;padding:0 21px 0 4px}
   .items{display:flex;gap:8px}
   button{margin-left:auto;border:0;background:none;padding:0}`,
  `<div class="items">${[["thunderbird", 1], ["terminal", 2], ["calc", 0], ["monitor", 1], ["filezilla", 1], ["chrome", 2], ["vscode", 1], ["files", 1], ["editor", 1], ["writer", 0], ["skype", 1], ["postman", 1], ["burn", 1], ["disk", 1]]
    .map(([n, w]) => `<dock-item icon="${n}" windows="${w}"${n === "chrome" ? " active" : ""}></dock-item>`).join("")}</div>
   <button aria-label="Show applications"><ui-icon name="grid" style="--w:30px"></ui-icon></button>`);
</script>
</body>
</html>
